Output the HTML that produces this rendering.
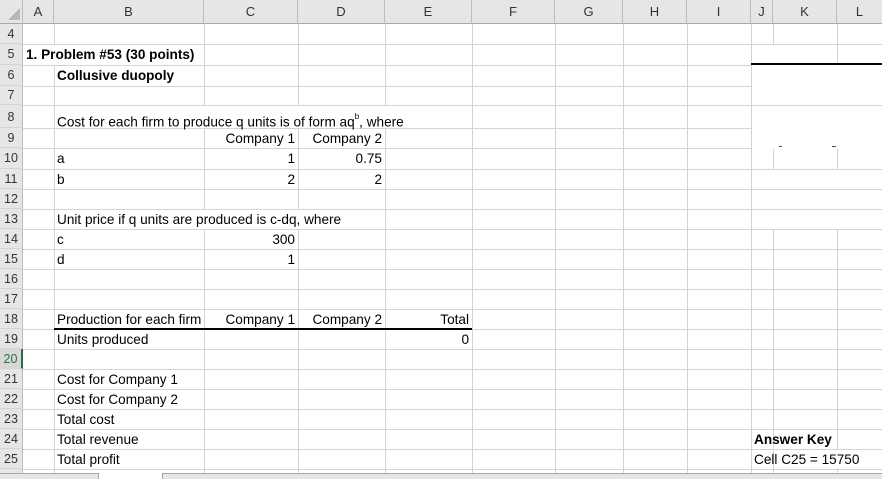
<!DOCTYPE html>
<html><head><meta charset="utf-8"><style>
*{margin:0;padding:0;box-sizing:border-box}
body{width:882px;height:479px;overflow:hidden;background:#fff;position:relative;font-family:"Liberation Sans",Arial,sans-serif;font-size:13.6px;color:#000}
.v{position:absolute;width:1px;background:#d4d4d4;top:24px;height:449px}
.h{position:absolute;height:1px;background:#d4d4d4;left:0;width:882px}
.ch{position:absolute;top:0;height:24px;line-height:24px;text-align:center;background:#e6e6e6;color:#333;font-size:13px;border-right:1px solid #bcbcbc;border-bottom:1px solid #a8a8a8}
.rh{position:absolute;left:0;width:23px;text-align:center;background:#e6e6e6;color:#333;font-size:12.5px;border-right:1px solid #bcbcbc;border-bottom:1px solid #d4d4d4}
.t{position:absolute;white-space:nowrap;padding:0 3px}
.o{background:#fff;padding:0 2px}
.r{text-align:right}
.b{font-weight:bold}
.w{position:absolute;background:#fff}
</style></head><body>
<div class="ch" style="left:0;width:23px"><svg width="12" height="12" style="position:absolute;left:8px;top:8px"><path d="M12 0 L12 12 L0 12 Z" fill="#b8b8b8"/></svg></div>
<div class="ch" style="left:23px;width:31px">A</div>
<div class="ch" style="left:54px;width:150px">B</div>
<div class="ch" style="left:204px;width:94px">C</div>
<div class="ch" style="left:298px;width:87px">D</div>
<div class="ch" style="left:385px;width:87px">E</div>
<div class="ch" style="left:472px;width:83px">F</div>
<div class="ch" style="left:555px;width:68px">G</div>
<div class="ch" style="left:623px;width:64px">H</div>
<div class="ch" style="left:687px;width:64px">I</div>
<div class="ch" style="left:751px;width:22px">J</div>
<div class="ch" style="left:773px;width:64px">K</div>
<div class="ch" style="left:837px;width:45px;border-right:none">L</div>

<div class="v" style="left:54px"></div>
<div class="v" style="left:204px"></div>
<div class="v" style="left:298px"></div>
<div class="v" style="left:385px"></div>
<div class="v" style="left:472px"></div>
<div class="v" style="left:555px"></div>
<div class="v" style="left:623px"></div>
<div class="v" style="left:687px"></div>
<div class="v" style="left:751px"></div>
<div class="v" style="left:773px"></div>
<div class="v" style="left:837px"></div>

<div class="h" style="top:44px"></div><div class="h" style="top:65px"></div><div class="h" style="top:86px"></div>
<div class="h" style="top:105px"></div><div class="h" style="top:128px"></div><div class="h" style="top:148px"></div>
<div class="h" style="top:169px"></div><div class="h" style="top:189px"></div><div class="h" style="top:209px"></div>
<div class="h" style="top:229px"></div><div class="h" style="top:249px"></div><div class="h" style="top:269px"></div>
<div class="h" style="top:289px"></div><div class="h" style="top:309px"></div><div class="h" style="top:329px"></div>
<div class="h" style="top:349px"></div><div class="h" style="top:369px"></div><div class="h" style="top:389px"></div>
<div class="h" style="top:409px"></div><div class="h" style="top:429px"></div><div class="h" style="top:449px"></div>
<div class="h" style="top:469px"></div>

<div class="w" style="left:752px;top:45px;width:130px;height:104px"></div>
<div class="w" style="left:752px;top:170px;width:130px;height:59px"></div>
<div class="h" style="top:189px;left:752px;width:130px"></div>
<div class="h" style="top:209px;left:752px;width:130px"></div>
<div class="h" style="top:105px;left:752px;width:130px"></div>
<div class="v" style="left:837px;top:45px;height:19px"></div>
<div style="position:absolute;left:751px;top:63px;width:131px;height:2px;background:#000"></div>
<div style="position:absolute;left:779px;top:146px;width:3px;height:1px;background:#2a4a8a"></div>
<div style="position:absolute;left:832px;top:146px;width:4px;height:1px;background:#2a4a8a"></div>

<div style="position:absolute;left:54px;top:328px;width:418px;height:2px;background:#000"></div>

<div class="rh" style="top:24px;height:20px;line-height:20px">4</div>
<div class="rh" style="top:44px;height:21px;line-height:21px">5</div>
<div class="rh" style="top:65px;height:21px;line-height:21px">6</div>
<div class="rh" style="top:86px;height:19px;line-height:19px">7</div>
<div class="rh" style="top:105px;height:23px;line-height:25px">8</div>
<div class="rh" style="top:128px;height:20px;line-height:20px">9</div>
<div class="rh" style="top:148px;height:21px;line-height:21px">10</div>
<div class="rh" style="top:169px;height:20px;line-height:20px">11</div>
<div class="rh" style="top:189px;height:20px;line-height:20px">12</div>
<div class="rh" style="top:209px;height:20px;line-height:20px">13</div>
<div class="rh" style="top:229px;height:20px;line-height:20px">14</div>
<div class="rh" style="top:249px;height:20px;line-height:20px">15</div>
<div class="rh" style="top:269px;height:20px;line-height:20px">16</div>
<div class="rh" style="top:289px;height:20px;line-height:20px">17</div>
<div class="rh" style="top:309px;height:20px;line-height:20px">18</div>
<div class="rh" style="top:329px;height:20px;line-height:20px">19</div>
<div class="rh" style="top:349px;height:20px;line-height:20px;background:#d8d8d8;color:#217346;border-right:2px solid #217346">20</div>
<div class="rh" style="top:369px;height:20px;line-height:20px">21</div>
<div class="rh" style="top:389px;height:20px;line-height:20px">22</div>
<div class="rh" style="top:409px;height:20px;line-height:20px">23</div>
<div class="rh" style="top:429px;height:20px;line-height:20px">24</div>
<div class="rh" style="top:449px;height:20px;line-height:20px">25</div>
<div class="rh" style="top:469px;height:6px"></div>

<div class="t b o" style="left:24px;top:45px;height:20px;line-height:20px">1. Problem #53 (30 points)</div>
<div class="t b" style="left:54px;top:65px;line-height:22px">Collusive duopoly</div>
<div class="t o" style="left:55px;top:106px;height:22px;line-height:26px">Cost for each firm to produce q units is of form aq<sup style="font-size:8px;position:relative;top:-2px">b</sup>, where</div>
<div class="t r" style="left:204px;width:94px;top:128px;line-height:21px">Company 1</div>
<div class="t r" style="left:298px;width:87px;top:128px;line-height:21px">Company 2</div>
<div class="t" style="left:54px;top:148px;line-height:22px">a</div>
<div class="t r" style="left:204px;width:94px;top:148px;line-height:22px">1</div>
<div class="t r" style="left:298px;width:87px;top:148px;line-height:22px">0.75</div>
<div class="t" style="left:54px;top:169px;line-height:21px">b</div>
<div class="t r" style="left:204px;width:94px;top:169px;line-height:21px">2</div>
<div class="t r" style="left:298px;width:87px;top:169px;line-height:21px">2</div>
<div class="t o" style="left:55px;top:210px;height:19px;line-height:19px">Unit price if q units are produced is c-dq, where</div>
<div class="t" style="left:54px;top:229px;line-height:21px">c</div>
<div class="t r" style="left:204px;width:94px;top:229px;line-height:21px">300</div>
<div class="t" style="left:54px;top:249px;line-height:21px">d</div>
<div class="t r" style="left:204px;width:94px;top:249px;line-height:21px">1</div>
<div class="t" style="left:54px;top:309px;line-height:21px;width:150px;overflow:hidden">Production for each firm</div>
<div class="t r" style="left:204px;width:94px;top:309px;line-height:21px">Company 1</div>
<div class="t r" style="left:298px;width:87px;top:309px;line-height:21px">Company 2</div>
<div class="t r" style="left:385px;width:87px;top:309px;line-height:21px">Total</div>
<div class="t" style="left:54px;top:329px;line-height:21px">Units produced</div>
<div class="t r" style="left:385px;width:87px;top:329px;line-height:21px">0</div>
<div class="t" style="left:54px;top:369px;line-height:21px">Cost for Company 1</div>
<div class="t" style="left:54px;top:389px;line-height:21px">Cost for Company 2</div>
<div class="t" style="left:54px;top:409px;line-height:21px">Total cost</div>
<div class="t" style="left:54px;top:429px;line-height:21px">Total revenue</div>
<div class="t" style="left:54px;top:449px;line-height:21px">Total profit</div>
<div class="w" style="left:774px;top:430px;width:62px;height:18px"></div>
<div class="t b" style="left:751px;top:429px;line-height:21px">Answer Key</div>
<div class="w" style="left:774px;top:450px;width:100px;height:18px"></div>
<div class="t" style="left:751px;top:449px;line-height:21px">Cell C25 = 15750</div>

<div style="position:absolute;left:0;top:473px;width:882px;height:6px;background:#e6e6e6;border-top:1px solid #a8a8a8"></div>
<div style="position:absolute;left:98px;top:473px;width:65px;height:6px;background:#fff;border-left:1px solid #a8a8a8;border-right:1px solid #a8a8a8"></div>
</body></html>
